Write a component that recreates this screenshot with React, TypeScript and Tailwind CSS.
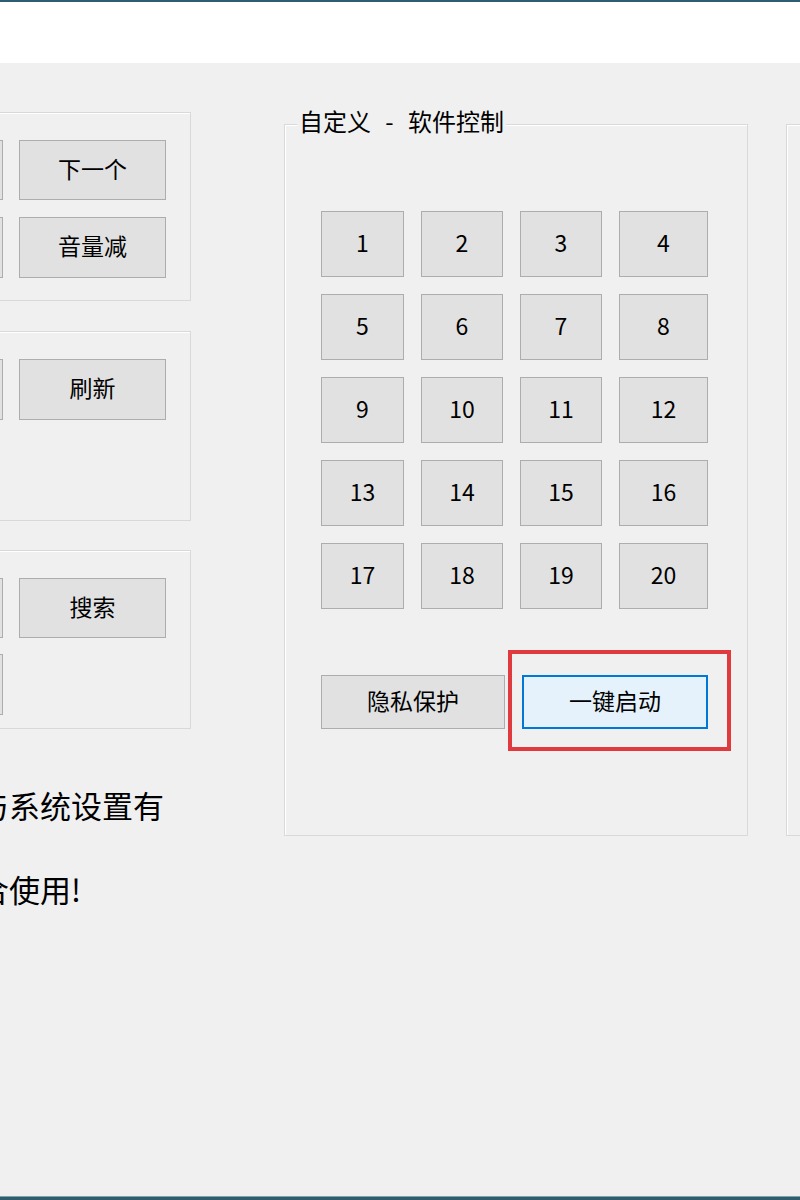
import React from 'react';

const font = { fontFamily: '"Noto Sans CJK SC", "Noto Sans", sans-serif' };

const numbers = Array.from({ length: 20 }, (_, i) => i + 1);

function WinButton({ label, className = '' }: { label?: string; className?: string }) {
  return (
    <div
      className={`flex items-center justify-center pb-[4px] bg-[#e1e1e1] border border-[#adadad] text-[23px] text-black leading-none ${className}`}
    >
      {label}
    </div>
  );
}

function GroupBox({ className = '', children }: { className?: string; children?: React.ReactNode }) {
  return (
    <div className={`border border-[#d9d9d9] shadow-[inset_1px_1px_0_#ffffff] ${className}`}>{children}</div>
  );
}

export default function App() {
  return (
    <div className="w-[800px] h-[1200px] overflow-hidden flex flex-col bg-[#f0f0f0]" style={font}>
      {/* title strip */}
      <div className="h-[63px] shrink-0 bg-white border-t-2 border-[#2f5d70]"></div>

      <div className="flex-1 flex items-start overflow-hidden">
        {/* left column, mostly cut off */}
        <div className="ml-[-171px] w-[362px] shrink-0 flex flex-col">
          <GroupBox className="mt-[49px] h-[189px] pl-[26px] pt-[27px] flex flex-col gap-[17px]">
            <div className="flex gap-[16px]">
              <WinButton className="w-[147px] h-[60px]" />
              <WinButton label="下一个" className="w-[147px] h-[60px]" />
            </div>
            <div className="flex gap-[16px]">
              <WinButton className="w-[147px] h-[61px]" />
              <WinButton label="音量减" className="w-[147px] h-[61px]" />
            </div>
          </GroupBox>

          <GroupBox className="mt-[30px] h-[190px] pl-[26px] pt-[27px]">
            <div className="flex gap-[16px]">
              <WinButton className="w-[147px] h-[61px]" />
              <WinButton label="刷新" className="w-[147px] h-[61px]" />
            </div>
          </GroupBox>

          <GroupBox className="mt-[29px] h-[179px] pl-[26px] pt-[27px] flex flex-col gap-[16px]">
            <div className="flex gap-[16px]">
              <WinButton className="w-[147px] h-[60px]" />
              <WinButton label="搜索" className="w-[147px] h-[60px]" />
            </div>
            <div className="flex gap-[16px]">
              <WinButton className="w-[147px] h-[61px]" />
            </div>
          </GroupBox>

          <div className="mt-[58px] flex text-[31px] leading-[36px] text-black whitespace-nowrap">
            <span className="w-[180px] shrink-0 flex justify-end">可能与</span>
            <span>系统设置有</span>
          </div>
          <div className="mt-[48px] flex text-[31px] leading-[36px] text-black whitespace-nowrap">
            <span className="w-[180px] shrink-0 flex justify-end">请配合</span>
            <span>使用!</span>
          </div>
        </div>

        {/* middle group: 自定义 - 软件控制 */}
        <div className="ml-[93px] mt-[61px] w-[464px] h-[712px] shrink-0 relative border border-[#d9d9d9] shadow-[inset_1px_1px_0_#ffffff] pl-[36px] pt-[86px]">
          <div className="absolute left-[12px] top-[-18px] px-[2px] bg-[#f0f0f0] flex text-[24px] leading-[28px] text-black whitespace-nowrap">
            <span>自定义</span>
            <span className="w-[37px] text-center">-</span>
            <span>软件控制</span>
          </div>

          <div className="grid grid-cols-[83px_82px_82px_89px] auto-rows-[66px] gap-x-[17px] gap-y-[17px]">
            {numbers.map((n) => (
              <WinButton key={n} label={String(n)} className="h-full" />
            ))}
          </div>

          <div className="relative mt-[66px] flex gap-[17px]">
            <WinButton label="隐私保护" className="w-[184px] h-[54px]" />
            <div className="w-[186px] h-[54px] flex items-center justify-center pb-[4px] bg-[#e5f1fb] border-2 border-[#0078d7] text-[23px] leading-none text-black">
              一键启动
            </div>
            {/* red highlight annotation */}
            <div className="absolute left-[187px] top-[-25px] w-[223px] h-[101px] border-4 border-[#e0393e]"></div>
          </div>
        </div>

        {/* right group, cut off */}
        <div className="ml-[38px] mt-[61px] w-[300px] h-[712px] shrink-0 border border-[#d9d9d9] shadow-[inset_1px_1px_0_#ffffff]"></div>
      </div>

      {/* bottom edge */}
      <div className="h-[4px] shrink-0 border-t border-[#7fa0ae] bg-[#2f5d6e]"></div>
    </div>
  );
}
